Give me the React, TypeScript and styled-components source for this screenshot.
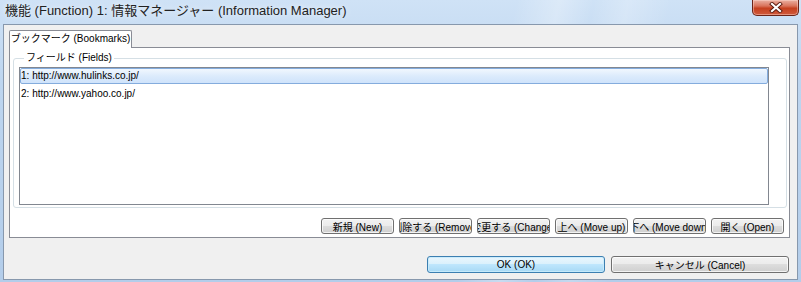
import React, { FunctionComponent } from "react";
import styled, { createGlobalStyle } from "styled-components";

const GlobalStyle = createGlobalStyle`
  html, body {
    margin: 0;
    padding: 0;
    background: #bcd4ee;
  }
  body {
    font-family: "Liberation Sans", "Noto Sans CJK JP", sans-serif;
  }
  #root {
    width: 801px;
    height: 282px;
  }
`;

const Window = styled.div`
  width: 801px;
  height: 282px;
  box-sizing: border-box;
  display: flex;
  flex-direction: column;
  background: linear-gradient(
      102deg,
      transparent 60%,
      rgba(255, 255, 255, 0.28) 65%,
      transparent 69%,
      rgba(255, 255, 255, 0.22) 73%,
      transparent 78%
    ),
    linear-gradient(180deg, #cfe2f6 0%, #bdd5ef 30%, #b3cdea 100%);
`;

const TitleBar = styled.div`
  height: 24px;
  flex: none;
  display: flex;
  align-items: flex-start;
  justify-content: space-between;
  padding-left: 5px;
`;

const Title = styled.div`
  font-size: 13px;
  line-height: 21px;
  color: #222;
  white-space: nowrap;
  text-shadow: 0 0 6px rgba(255, 255, 255, 0.9);
`;

const CloseButton = styled.div`
  width: 47px;
  height: 16px;
  box-sizing: border-box;
  margin-right: 2px;
  border: 1px solid #6b2418;
  border-top: none;
  border-radius: 0 0 5px 5px;
  background: linear-gradient(
    180deg,
    #eab0a2 0%,
    #d9735b 40%,
    #c5401f 55%,
    #cf5a3c 100%
  );
  box-shadow: inset 0 0 0 1px rgba(255, 220, 210, 0.45);
  display: flex;
  align-items: center;
  justify-content: center;
`;

const Client = styled.div`
  flex: 1;
  margin: 0 3px 2px 3px;
  border: 1px solid #8798ad;
  background: #f0f0f0;
  display: flex;
  flex-direction: column;
  padding: 5px 7px 6px 5px;
`;

const TabStrip = styled.div`
  display: flex;
`;

const Tab = styled.div`
  width: 123px;
  height: 18px;
  box-sizing: border-box;
  margin-bottom: -1px;
  position: relative;
  z-index: 1;
  border: 1px solid #898c95;
  border-bottom: none;
  border-radius: 2px 2px 0 0;
  background: #ffffff;
  font-size: 10px;
  line-height: 15px;
  text-align: center;
  color: #000;
  white-space: nowrap;
`;

const TabPanel = styled.div`
  border: 1px solid #898c95;
  background: #ffffff;
  display: flex;
  flex-direction: column;
  padding: 4px 2px 3px 3px;
`;

const GroupBox = styled.fieldset`
  margin: 0;
  min-width: 0;
  border: 1px solid #d5dfe5;
  border-radius: 3px;
  padding: 0 0 2px 5px;
`;

const GroupTitle = styled.legend`
  margin-left: 5px;
  padding: 0 2px;
  font-size: 10px;
  line-height: 12px;
  color: #000;
`;

const ListBox = styled.div`
  margin-top: 3px;
  width: 750px;
  height: 138px;
  box-sizing: border-box;
  border: 1px solid #828790;
  background: #ffffff;
  display: flex;
  flex-direction: column;
`;

const ListRow = styled.div<{ $selected?: boolean }>`
  height: 16px;
  box-sizing: border-box;
  margin-bottom: 2px;
  border: 1px solid ${(p) => (p.$selected ? "#84acdd" : "transparent")};
  border-radius: 2px;
  background: ${(p) =>
    p.$selected
      ? "linear-gradient(180deg, #f1f7fe 0%, #dcebfc 50%, #cfe3fb 100%)"
      : "transparent"};
  font-size: 10px;
  line-height: 14px;
  color: #000;
  white-space: nowrap;
`;

const ButtonRow = styled.div<{ $gap: number }>`
  display: flex;
  justify-content: flex-end;
  gap: ${(p) => p.$gap}px;
`;

const ToolRow = styled(ButtonRow)`
  margin-top: 10px;
  padding-right: 3px;
`;

const Footer = styled(ButtonRow)`
  margin-top: 18px;
  padding-right: 1px;
`;

const Button = styled.button<{ $width: number; $height: number; $default?: boolean }>`
  width: ${(p) => p.$width}px;
  height: ${(p) => p.$height}px;
  box-sizing: border-box;
  padding: 0;
  margin: 0;
  display: flex;
  align-items: center;
  justify-content: center;
  overflow: hidden;
  white-space: nowrap;
  font-family: "Liberation Sans", "Noto Sans CJK JP", sans-serif;
  font-size: 10px;
  color: #000;
  border-radius: 3px;
  border: 1px solid ${(p) => (p.$default ? "#3c7fb1" : "#707070")};
  background: ${(p) =>
    p.$default
      ? "linear-gradient(180deg, #eaf6fd 0%, #d9f0fc 50%, #bee6fd 50%, #a7d9f5 100%)"
      : "linear-gradient(180deg, #f2f2f2 0%, #ebebeb 50%, #dddddd 50%, #cfcfcf 100%)"};
  box-shadow: inset 0 0 0 1px
    ${(p) => (p.$default ? "rgba(200, 235, 252, 0.9)" : "rgba(255, 255, 255, 0.75)")};
`;

const CloseIcon: FunctionComponent = () => (
  <svg width="14" height="11" viewBox="0 0 14 11">
    <path d="M3 2 L11 9 M11 2 L3 9" stroke="#5a1a0f" strokeWidth="4" strokeLinecap="square" />
    <path d="M3 2 L11 9 M11 2 L3 9" stroke="#ffffff" strokeWidth="2.2" strokeLinecap="square" />
  </svg>
);

const bookmarks = ["http://www.hulinks.co.jp/", "http://www.yahoo.co.jp/"];

// the middle labels are wider than their buttons and get clipped, as in the original dialog
const tools = [
  "新規 (New)",
  "削除する (Remove)",
  "変更する (Change)",
  "上へ (Move up)",
  "下へ (Move down)",
  "開く (Open)",
];

export default function App() {
  return (
    <>
      <GlobalStyle />
      <Window>
        <TitleBar>
          <Title>機能 (Function) 1: 情報マネージャー (Information Manager)</Title>
          <CloseButton>
            <CloseIcon />
          </CloseButton>
        </TitleBar>
        <Client>
          <TabStrip>
            <Tab>ブックマーク (Bookmarks)</Tab>
          </TabStrip>
          <TabPanel>
            <GroupBox>
              <GroupTitle>フィールド (Fields)</GroupTitle>
              <ListBox>
                {bookmarks.map((url, i) => (
                  <ListRow key={url} $selected={i === 0}>
                    {i + 1}: {url}
                  </ListRow>
                ))}
              </ListBox>
            </GroupBox>
            <ToolRow $gap={5}>
              {tools.map((t) => (
                <Button key={t} $width={73} $height={16}>
                  {t}
                </Button>
              ))}
            </ToolRow>
          </TabPanel>
          <Footer $gap={6}>
            <Button $width={178} $height={17} $default>
              OK (OK)
            </Button>
            <Button $width={178} $height={17}>
              キャンセル (Cancel)
            </Button>
          </Footer>
        </Client>
      </Window>
    </>
  );
}
